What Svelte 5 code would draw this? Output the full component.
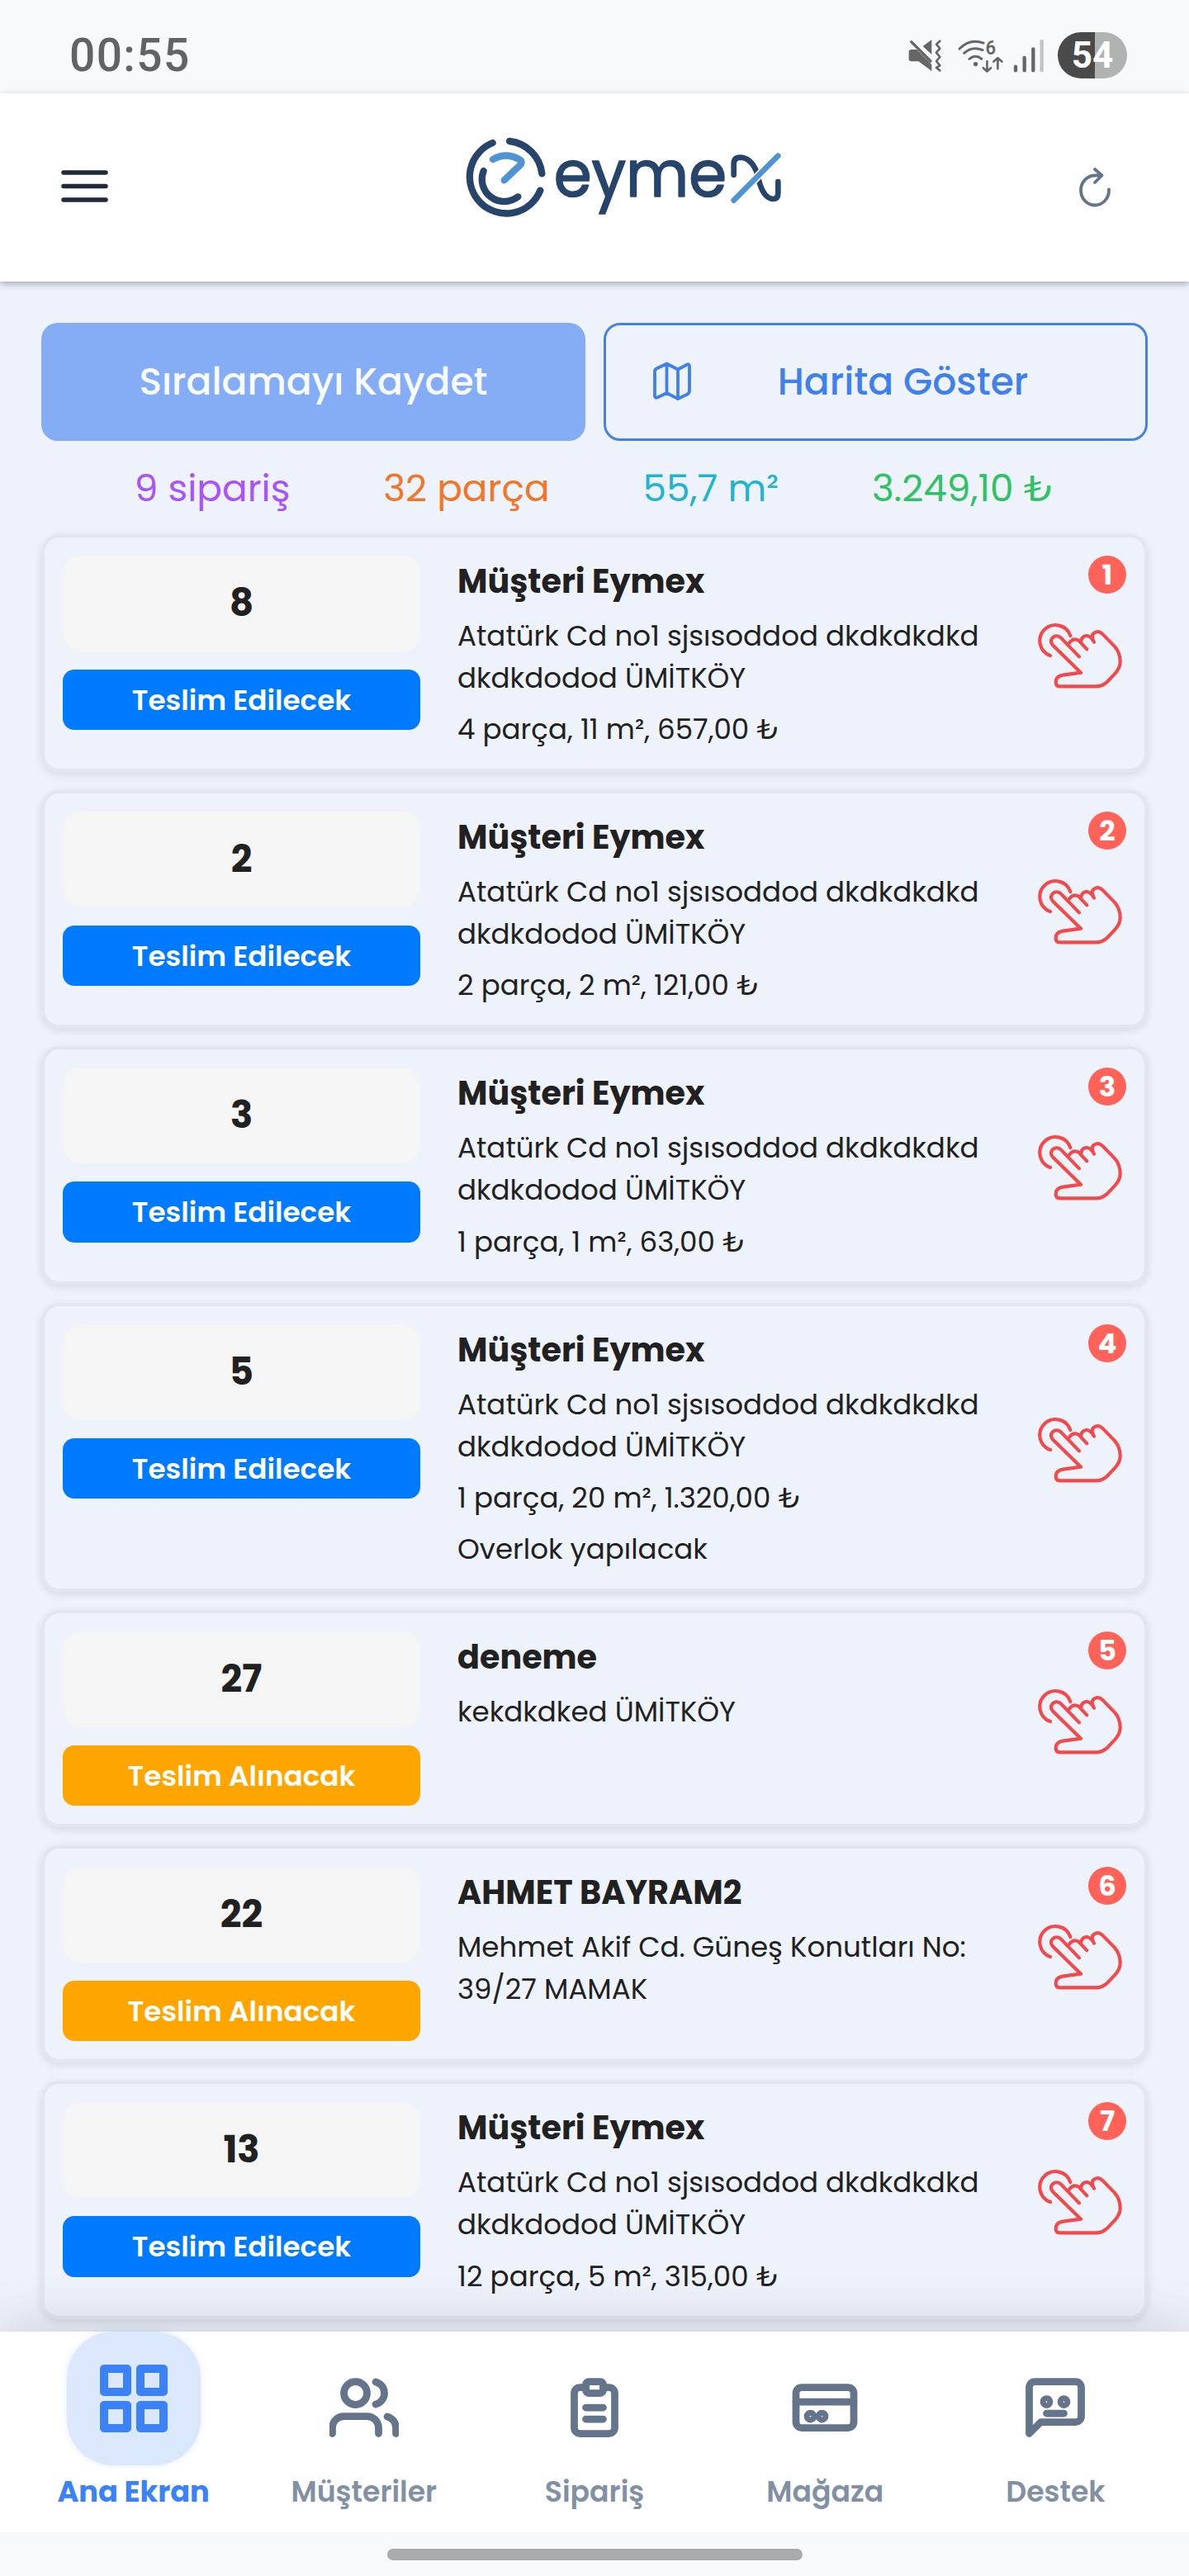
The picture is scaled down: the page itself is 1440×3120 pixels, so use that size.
<script>
	const musteriAdres = 'Atatürk Cd no1 sjsısoddod dkdkdkdkd dkdkdodod ÜMİTKÖY';

	const summary = [
		{ text: '9 sipariş', type: 'orders' },
		{ text: '32 parça', type: 'pieces' },
		{ text: '55,7 m²', type: 'area' },
		{ text: '3.249,10 ₺', type: 'total' }
	];

	const orders = [
		{ no: 8, name: 'Müşteri Eymex', address: musteriAdres, info: '4 parça, 11 m², 657,00 ₺' },
		{ no: 2, name: 'Müşteri Eymex', address: musteriAdres, info: '2 parça, 2 m², 121,00 ₺' },
		{ no: 3, name: 'Müşteri Eymex', address: musteriAdres, info: '1 parça, 1 m², 63,00 ₺' },
		{
			no: 5,
			name: 'Müşteri Eymex',
			address: musteriAdres,
			info: '1 parça, 20 m², 1.320,00 ₺',
			note: 'Overlok yapılacak'
		},
		{ no: 27, name: 'deneme', address: 'kekdkdked ÜMİTKÖY', pickup: true },
		{
			no: 22,
			name: 'AHMET BAYRAM2',
			address: 'Mehmet Akif Cd. Güneş Konutları No: 39/27 MAMAK',
			pickup: true
		},
		{ no: 13, name: 'Müşteri Eymex', address: musteriAdres, info: '12 parça, 5 m², 315,00 ₺' }
	];

	const tabs = [
		{ label: 'Ana Ekran', icon: 'grid' },
		{ label: 'Müşteriler', icon: 'users' },
		{ label: 'Sipariş', icon: 'clipboard' },
		{ label: 'Mağaza', icon: 'card' },
		{ label: 'Destek', icon: 'chat' }
	];

	let active = 'grid';
</script>

<div class="screen">
	<div class="statusbar">
		<span class="clock">00:55</span>
		<div class="indicators">
			<svg class="mute" viewBox="28 48 126 126" fill="none">
				<path d="M84 78L116 54V108Z" fill="#666" />
				<path d="M33 98Q33 90 42 90H62L116 144V168L68 133H42Q33 133 33 124Z" fill="#666" />
				<path d="M48 58L118 126" stroke="#f8f9fb" stroke-width="10" />
				<path d="M42 62L112 132" stroke="#666" stroke-width="10" stroke-linecap="round" />
				<path d="M146 59L133 71L146 86L133 101L146 117L133 132L146 148L133 156L146 166" stroke="#666" stroke-width="8" stroke-linecap="round" stroke-linejoin="round" />
			</svg>
			<svg class="wifi" viewBox="206 48 172 126" fill="none" stroke="#666" stroke-width="9" stroke-linecap="round" stroke-linejoin="round">
				<path d="M215 87Q254 48 303 66M232 103Q262 76 300 92M251 124Q274 106 296 124" />
				<circle cx="274" cy="143" r="8" fill="#666" stroke="none" />
				<path d="M316 133V170M302 157L316 170L330 157M355 160V121M340 134L355 121L370 134" stroke-width="8" />
				<text x="310" y="108" textLength="38" lengthAdjust="spacingAndGlyphs">6</text>
			</svg>
			<svg class="signal" viewBox="410 48 114 126" fill="none" stroke="#666" stroke-width="13" stroke-linecap="round">
				<path d="M419 152V166M451 120V166M483 88V166" />
				<path d="M514 60V166" stroke="#c2c3c4" />
			</svg>
			<span class="battery">54</span>
		</div>
	</div>

	<header>
		<svg class="menu" viewBox="0 0 57 39" stroke="#1e293b" stroke-width="5.5" stroke-linecap="round">
			<path d="M3 3H54M3 19.5H54M3 36H54" />
		</svg>
		<svg class="logo" viewBox="69 45 1152 300" fill="none" stroke="#27456b" stroke-width="25" stroke-linecap="round" stroke-linejoin="round">
			<path d="M170 69A133 133 0 1 0 343 242M231 63A133 133 0 0 1 349 181" />
			<path d="M137 171A81 81 0 0 0 262 265" />
			<path d="M171 129Q218 102 266 129Q280 137 272 148L212 205" stroke="#4e93d4" />
			<text class="wordmark" x="392" y="263" textLength="628" lengthAdjust="spacingAndGlyphs">eyme</text>
			<g stroke-width="20">
				<path d="M1046 185V146Q1046 122 1070 122Q1108 124 1128 172L1142 222Q1158 270 1188 273Q1207 273 1207 252V210" />
				<path d="M1046 278L1207 116" stroke="#fff" stroke-width="30" stroke-linecap="butt" />
				<path d="M1046 278L1207 116" stroke="#4e93d4" />
			</g>
		</svg>
		<svg class="refresh" viewBox="0 0 38 48" fill="none" stroke="#64748b" stroke-width="3.8" stroke-linecap="round" stroke-linejoin="round">
			<path d="M36 27.500A17 18 0 1 1 19 10.500H27M19 3L27.500 10.500L19 19" />
		</svg>
	</header>

	<main>
		<div class="actions">
			<button class="save" disabled>Sıralamayı Kaydet</button>
			<button class="map">
				<svg viewBox="0 0 48 48" fill="none" stroke="#3f80ea" stroke-width="3.8" stroke-linecap="round" stroke-linejoin="round">
					<path d="M17.500 3.500L31 10.500L42 4.500Q45 3.500 45 7V36Q45 39 42.500 40.500L31 46L17.500 39L6 44.500Q3 45.500 3 42V13Q3 10.500 5 9.500ZM17.500 3.500V39M31 10.500V46" />
				</svg>
				<span>Harita Göster</span>
			</button>
		</div>

		<div class="summary">
			{#each summary as item}
				<span class={item.type}>{item.text}</span>
			{/each}
		</div>

		<div class="orders-list">
			{#each orders as order, i}
				<article class="card">
					<div class="left">
						<div class="number">{order.no}</div>
						<div class="status" class:pickup={order.pickup}>
							{order.pickup ? 'Teslim Alınacak' : 'Teslim Edilecek'}
						</div>
					</div>
					<div class="details">
						<h2>{order.name}</h2>
						<p>{order.address}</p>
						{#if order.info}<p>{order.info}</p>{/if}
						{#if order.note}<p>{order.note}</p>{/if}
					</div>
					<svg class="hand" viewBox="108 315 309 246" fill="none" stroke="#f24a4c" stroke-width="12.5" stroke-linecap="round" stroke-linejoin="round">
						<path d="M153 435A57 57 0 1 1 226 363" />
						<path d="M258 439L192 371C182 360 166 362 159 373C153 383 156 391 163 398L264 497L199 506Q173 510 173 532Q173 547 188 547H318Q343 547 360 530L386 503Q407 480 407 458Q407 424 386 401L342 356Q328 343 312 353Q298 364 312 386" />
						<path d="M222 389Q237 369 256 380L286 412M264 386Q266 366 283 363Q295 362 308 378" />
					</svg>
					<span class="step">{i + 1}</span>
				</article>
			{/each}
		</div>
	</main>

	<nav>
		{#each tabs as tab}
			<div class="tab" class:active={tab.icon === active}>
				<div class="icon">
					<svg viewBox="0 0 24 24" fill="none" stroke="currentColor" stroke-width="2.5" stroke-linecap="round" stroke-linejoin="round">
						{#if tab.icon === 'grid'}
							<path d="M3 3h7v7H3zM14 3h7v7h-7zM14 14h7v7h-7zM3 14h7v7H3z" />
						{:else if tab.icon === 'users'}
							<path d="M17 21v-2a4 4 0 0 0-4-4H5a4 4 0 0 0-4 4v2" />
							<circle cx="9" cy="7" r="4" />
							<path d="M23 21v-2a4 4 0 0 0-3-3.870M16 3.130a4 4 0 0 1 0 7.750" />
						{:else if tab.icon === 'clipboard'}
							<path d="M9 5H7a2 2 0 0 0-2 2v12a2 2 0 0 0 2 2h10a2 2 0 0 0 2-2V7a2 2 0 0 0-2-2h-2" />
							<rect x="9" y="3" width="6" height="4" rx="1" />
							<path d="M9 12h6M9 16h6" />
						{:else if tab.icon === 'card'}
							<rect x="2" y="5" width="20" height="14" rx="2" />
							<path d="M2 10h20" />
							<circle cx="7" cy="15" r="1" />
							<circle cx="11" cy="15" r="1" />
						{:else}
							<path d="M21 15a2 2 0 0 1-2 2H7l-4 4V5a2 2 0 0 1 2-2h14a2 2 0 0 1 2 2z" />
							<circle cx="9" cy="10" r="1" />
							<circle cx="15" cy="10" r="1" />
							<path d="M9 14h6" />
						{/if}
					</svg>
				</div>
				<span>{tab.label}</span>
			</div>
		{/each}
	</nav>

	<div class="homebar"><i></i></div>
</div>

<style>
	:global(body) {
		margin: 0;
	}

	.screen {
		width: 1440px;
		height: 3120px;
		display: flex;
		flex-direction: column;
		overflow: hidden;
		background: #eef2fa;
		color: #212121;
		font-family: Poppins, Inter, 'Open Sans', sans-serif;
	}

	.screen * {
		box-sizing: border-box;
	}

	svg {
		display: block;
		flex: none;
		overflow: visible;
	}

	.statusbar {
		height: 113px;
		flex: none;
		display: flex;
		align-items: center;
		justify-content: space-between;
		padding: 21px 75px 0 84px;
		background: #f8f9fb;
		font-family: Roboto, sans-serif;
	}

	.clock {
		font-size: 55px;
		font-weight: 500;
		line-height: 56px;
		letter-spacing: 1.4px;
		color: #636363;
	}

	.indicators {
		display: flex;
		align-items: center;
	}

	.mute {
		width: 42px;
		height: 42px;
	}

	.wifi {
		width: 57px;
		height: 42px;
		margin-left: 18px;
	}

	.wifi text {
		fill: #666;
		stroke: none;
		font-size: 70px;
		font-weight: 600;
	}

	.signal {
		width: 38px;
		height: 42px;
		margin: 0 16px 0 11px;
	}

	.battery {
		width: 84px;
		height: 56px;
		border-radius: 28px;
		background: linear-gradient(90deg, #4a4a4a 45px, #b1b2b2 45px);
		color: #fff;
		font-size: 44px;
		font-weight: 700;
		line-height: 57px;
		text-align: center;
	}

	header {
		position: relative;
		z-index: 1;
		height: 228px;
		flex: none;
		display: flex;
		align-items: center;
		padding: 0 95px 0 74px;
		background: #fff;
		box-shadow: 0 3px 8px rgba(40, 40, 70, 0.35);
	}

	.menu {
		width: 57px;
		height: 39px;
		margin-bottom: 4px;
	}

	.logo {
		width: 384px;
		height: 100px;
		margin: 0 0 24px 432px;
	}

	.wordmark {
		font-size: 236px;
		font-weight: 400;
		fill: #27456b;
		stroke-width: 5;
	}

	.refresh {
		width: 38px;
		height: 48px;
		margin: 0 0 3px auto;
	}

	main {
		flex: 1;
		min-height: 0;
		padding: 50px 50px 0;
	}

	.actions {
		display: grid;
		grid-template-columns: 1fr 1fr;
		gap: 22px;
	}

	button {
		height: 143px;
		padding: 0;
		border: 3px solid #4582e2;
		border-radius: 20px;
		background: none;
		color: #3f80ea;
		font: inherit;
		font-size: 45.6px;
		font-weight: 500;
	}

	.save {
		border: 0;
		background: #84adf5;
		color: #f8fbff;
	}

	.map {
		display: flex;
		align-items: center;
		padding-left: 56px;
	}

	.map svg {
		width: 48px;
		height: 48px;
		margin-bottom: 3px;
	}

	.map span {
		flex: 1;
		padding-right: 38px;
	}

	.summary {
		height: 113px;
		display: flex;
		justify-content: space-evenly;
		font-size: 45.4px;
		line-height: 114px;
		white-space: nowrap;
	}

	.orders {
		color: #a855f7;
	}

	.pieces {
		color: #f0762a;
	}

	.area {
		color: #1fb4cf;
	}

	.total {
		color: #2fc163;
	}

	.orders-list {
		display: flex;
		flex-direction: column;
		gap: 22px;
	}

	.card {
		position: relative;
		display: flex;
		padding: 22px;
		border: 4px solid #e2e7ef;
		border-radius: 22px;
		box-shadow: 0 3px 10px rgba(60, 70, 100, 0.14);
	}

	.left {
		width: 433px;
		flex: none;
	}

	.number {
		height: 116px;
		margin-bottom: 22px;
		border-radius: 22px;
		background: #f5f5f5;
		font-size: 45px;
		font-weight: 700;
		line-height: 116px;
		text-align: center;
	}

	.status {
		height: 73.2px;
		border-radius: 14px;
		background: #007bff;
		color: #fff;
		font-size: 34.2px;
		font-weight: 600;
		line-height: 75px;
		text-align: center;
	}

	.pickup {
		background: #ffa500;
	}

	.details {
		width: 660px;
		margin-left: 45px;
		padding-top: 6px;
	}

	h2 {
		margin: 0 0 15px;
		font-size: 39.7px;
		font-weight: 700;
		line-height: 51px;
	}

	p {
		margin: 0;
		font-size: 34.1px;
		line-height: 51px;
	}

	p + p {
		margin-top: 11.2px;
	}

	.hand {
		width: 103px;
		height: 82px;
		align-self: center;
		margin: 8px 0 0 43px;
	}

	.step {
		position: absolute;
		top: 22px;
		right: 22px;
		width: 46px;
		height: 46px;
		border-radius: 50%;
		background: #ff6259;
		color: #fff;
		font-size: 34px;
		font-weight: 700;
		line-height: 46px;
		text-align: center;
	}

	nav {
		position: relative;
		height: 243px;
		flex: none;
		display: flex;
		padding: 0 22px;
		background: #fff;
		box-shadow: 0 -4px 60px rgba(50, 60, 90, 0.2);
	}

	.tab {
		flex: 1;
		display: flex;
		flex-direction: column;
		align-items: center;
		color: #64748b;
	}

	.icon {
		width: 162px;
		height: 162px;
		display: flex;
		align-items: center;
		justify-content: center;
		padding-top: 22px;
	}

	.icon svg {
		width: 84px;
		height: 84px;
		overflow: hidden;
	}

	.tab span {
		margin-top: 8px;
		color: #8290a3;
		font-size: 34.7px;
		font-weight: 600;
		line-height: 48px;
		white-space: nowrap;
	}

	.active .icon {
		padding: 0;
		border-radius: 56px;
		background: linear-gradient(135deg, #dee8fc, #d9e8fc);
		box-shadow: 0 0 8px rgba(59, 130, 246, 0.15);
		color: #3b82f6;
	}

	.active .icon svg {
		width: 96px;
		height: 96px;
	}

	.tab.active span {
		color: #3b82f6;
		font-size: 35.2px;
		font-weight: 700;
	}

	.homebar {
		position: relative;
		height: 53px;
		flex: none;
		display: flex;
		justify-content: center;
		padding-top: 20px;
		background: #f8f9fb;
	}

	.homebar i {
		width: 503px;
		height: 14px;
		border-radius: 7px;
		background: #aaabad;
	}
</style>
